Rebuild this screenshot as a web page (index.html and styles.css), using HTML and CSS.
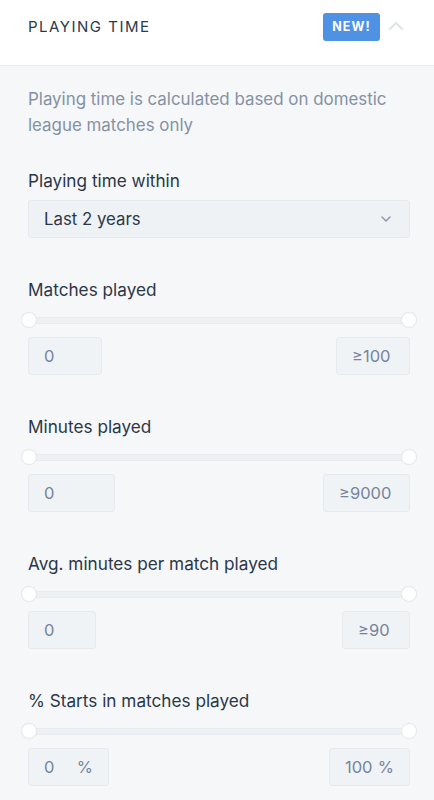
FILE: index.html
```html
<!DOCTYPE html>
<html>
<head>
<meta charset="utf-8">
<link rel="stylesheet" href="styles.css">
</head>
<body>
<div class="panel">
  <div class="header">
    <div class="title">PLAYING TIME</div>
    <div class="header-right">
      <span class="badge">NEW!</span>
      <svg class="collapse" width="16" height="10" viewBox="0 0 16 10"><path d="M2 8 L8 2 L14 8" fill="none" stroke="#dfe4ea" stroke-width="2" stroke-linecap="round" stroke-linejoin="round"/></svg>
    </div>
  </div>
  <div class="content">
    <p class="desc">Playing time is calculated based on domestic league matches only</p>

    <div class="field">
      <div class="label">Playing time within</div>
      <div class="select">
        <span>Last 2 years</span>
        <svg width="10" height="6" viewBox="0 0 10 6"><path d="M1 1 L5 5 L9 1" fill="none" stroke="#8a94a6" stroke-width="1.4" stroke-linecap="round" stroke-linejoin="round"/></svg>
      </div>
    </div>

    <div class="range">
      <div class="label">Matches played</div>
      <div class="slider"><div class="track"></div><span class="handle left"></span><span class="handle right"></span></div>
      <div class="inputs">
        <div class="num w73">0</div>
        <div class="num w73">≥100</div>
      </div>
    </div>

    <div class="range">
      <div class="label">Minutes played</div>
      <div class="slider"><div class="track"></div><span class="handle left"></span><span class="handle right"></span></div>
      <div class="inputs">
        <div class="num w87">0</div>
        <div class="num w87">≥9000</div>
      </div>
    </div>

    <div class="range">
      <div class="label">Avg. minutes per match played</div>
      <div class="slider"><div class="track"></div><span class="handle left"></span><span class="handle right"></span></div>
      <div class="inputs">
        <div class="num w67">0</div>
        <div class="num w67">≥90</div>
      </div>
    </div>

    <div class="range">
      <div class="label">% Starts in matches played</div>
      <div class="slider"><div class="track"></div><span class="handle left"></span><span class="handle right"></span></div>
      <div class="inputs">
        <div class="num w81 pct"><span>0</span><span class="unit">%</span></div>
        <div class="num w81 pct"><span>100</span><span class="unit">%</span></div>
      </div>
    </div>
  </div>
</div>
</body>
</html>
```
FILE: styles.css
```css
* { box-sizing: border-box; }
html, body {
  margin: 0;
  padding: 0;
  background: #f6f7f9;
  font-family: Inter, "Noto Sans", "Liberation Sans", sans-serif;
  color: #2b3748;
}
.panel { width: 434px; min-height: 800px; background: #f6f7f9; }
.header {
  height: 66px;
  background: #ffffff;
  border-bottom: 1px solid #e6e9ed;
  display: flex;
  justify-content: space-between;
  align-items: flex-start;
  padding: 13px 30px 0 28px;
}
.title {
  font-size: 15px;
  line-height: 28px;
  letter-spacing: 1.5px;
  color: #2c394b;
}
.header-right { display: flex; align-items: center; gap: 8px; }
.badge {
  display: inline-block;
  height: 28px;
  width: 57px;
  line-height: 28px;
  text-align: center;
  background: #4f91e2;
  color: #fff;
  font-size: 12.5px;
  font-weight: 700;
  letter-spacing: 1px;
  border-radius: 3px;
}
.collapse { display: block; margin-top: -2px; }
.content { padding: 20px 24px 0 28px; }
.desc {
  margin: 0;
  font-size: 16.9px;
  line-height: 26px;
  color: #8591a4;
}
.field { margin-top: 31px; }
.label {
  font-size: 17.2px;
  line-height: 24px;
  color: #2b3748;
}
.select {
  margin-top: 7px;
  height: 38px;
  background: #eff2f5;
  border: 1px solid #e5e9ee;
  border-radius: 3px;
  display: flex;
  align-items: center;
  justify-content: space-between;
  padding: 0 18px 0 15px;
  font-size: 16.8px;
  color: #2b3748;
}
.range { margin-top: 40px; }
.slider { position: relative; height: 20px; margin-top: 8px; }
.track {
  position: absolute;
  left: 0; right: 0; top: 7px;
  height: 7px;
  background: #eef1f4;
  border: 1px solid #e8ebef;
  border-radius: 4px;
}
.handle {
  position: absolute;
  top: 2px;
  width: 16px; height: 16px;
  border-radius: 50%;
  background: #ffffff;
  border: 1px solid #e6eaee;
  box-shadow: 0 0 1px rgba(0,0,0,0.05);
}
.handle.left { left: -7px; }
.handle.right { right: -7px; }
.inputs {
  margin-top: 7px;
  display: flex;
  justify-content: space-between;
}
.num {
  height: 38px;
  background: #f0f3f6;
  border: 1px solid #e6eaee;
  border-radius: 3px;
  padding: 0 15px;
  display: flex;
  align-items: center;
  font-size: 16.5px;
  color: #76849a;
}
.num.pct { justify-content: space-between; }
.unit { color: #76849a; }
.w73 { width: 74px; }
.w87 { width: 87px; }
.w67 { width: 68px; }
.w81 { width: 81px; }
```
